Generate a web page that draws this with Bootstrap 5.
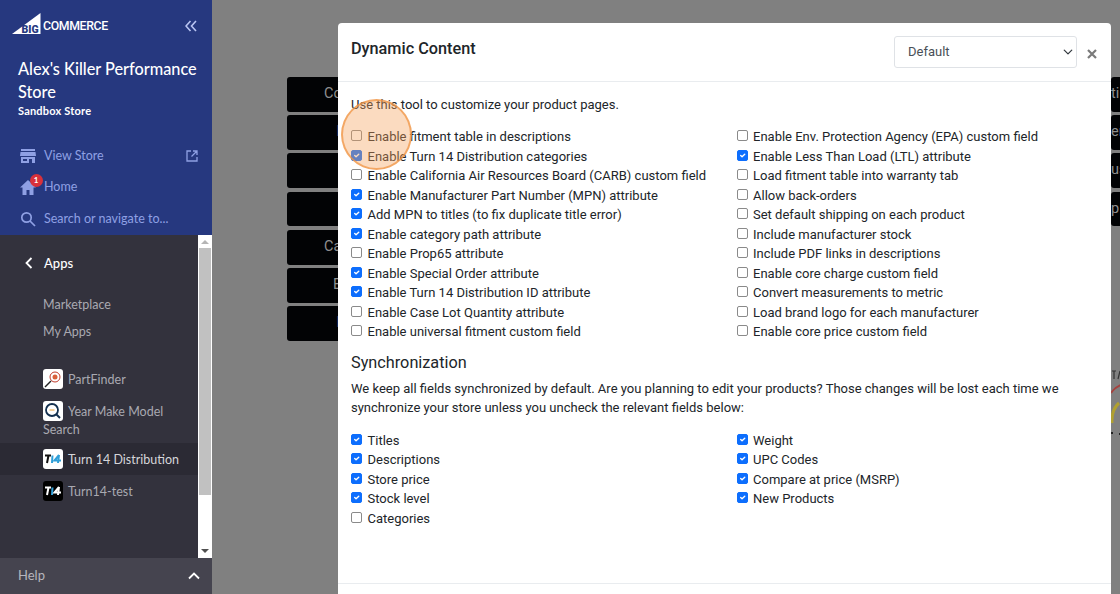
<!DOCTYPE html>
<html lang="en">
<head>
  <meta charset="UTF-8">
  <title>Dynamic Content</title>
  <link href="https://cdn.jsdelivr.net/npm/bootstrap@5.3.3/dist/css/bootstrap.min.css" rel="stylesheet">
  <style>
    html, body { height: 594px; overflow: hidden; }
    body { font-family: Roboto, sans-serif; background: #808080; }
    .shell { height: 594px; width: 1120px; position: relative; overflow: hidden; }
    .side { width: 212px; height: 594px; font-family: Lato, sans-serif; background: #33323d; flex: none; }
    .side-top { height: 235px; background: #26387f; color: #fff; padding: 11px 15px 0 18px; }
    .logo-row { height: 30px; margin-left: -6px; }
    .logo-mark { margin-bottom: 5px; }
    .logo-text { font: 500 12.3px Roboto, sans-serif; color: #fff; margin-left: 2px; letter-spacing: -.35px; }
    .store-name { font-size: 16.3px; line-height: 23px; font-weight: 500; margin: 16px -3px 0 0; }
    .store-type { font-size: 11px; line-height: 15px; font-weight: 700; letter-spacing: .2px; margin-top: -.5px; }
    .top-link { color: #8fa0e4; font-size: 12.5px; height: 31.5px; gap: 8px; }
    .top-links { margin: 23px -1px 0 2px; }
    .top-link svg { flex: none; }
    .alert-dot { position: absolute; left: 9.5px; top: -6px; width: 13px; height: 13px; border-radius: 50%; background: #d8313b; color: #fff; font-size: 8px; font-weight: 700; line-height: 13px; text-align: center; }
    .side-scroll { height: 323px; position: relative; }
    .scroll-track { width: 14px; height: 323px; background: #fff; flex: none; padding-top: 13px; position: relative; }
    .scroll-thumb { width: 12px; height: 247px; margin-left: 1px; background: #c1c1c1; }
    .scroll-up, .scroll-down { position: absolute; left: 3px; width: 0; height: 0; border-left: 4px solid transparent; border-right: 4px solid transparent; }
    .scroll-up { top: 5px; border-bottom: 4px solid #b5b5b5; }
    .scroll-down { bottom: 5px; border-top: 4px solid #505050; }
    .side-menu { flex: 1; min-width: 0; color: #a9a9b1; font-size: 12.5px; }
    .apps-head { color: #fff; height: 56px; font-size: 13px; font-weight: 500; padding-left: 25px; gap: 11px; }
    .apps-head span { padding-top: 2px; }
    .sub-link { padding-left: 43px; height: 27px; line-height: 27px; }
    .app-row { padding: 6px 0 6px 43px; line-height: 18px; }
    .app-row.d-flex > span:last-child { padding-top: 2px; }
    .app-one { margin-top: 18px; }
    .app-two { padding-bottom: 5px; line-height: 17px; }
    .app-tile { width: 20px; height: 20px; border-radius: 3px; background: #fff; flex: none; display: inline-flex; align-items: center; justify-content: center; vertical-align: -4px; margin-right: 5px; overflow: hidden; }
    .app-dark { background: #000; }
    .app-active { background: #2b2a34; color: #d6d6da; }
    .help-bar { height: 36px; background: #45444f; color: #b6b6bd; font-size: 13px; padding: 0 12px 0 18px; }
    .page-area { flex: 1; position: relative; background: #808080; }
    .dim-btn { position: absolute; left: 75px; width: 800px; height: 34.5px; background: #020305; border-radius: 3px; color: #8f8f8f; font-size: 14.5px; line-height: 34px; }
    .dim-btn span { position: absolute; left: 37px; }
    .dim-btn span.dim-far { left: 46px; }
    .dim-btn span.dim-blue { left: 49px; color: #2b3560; }
    .dim-right { left: 899px; width: 30px; }
    .dim-right span { left: 0; }
    .gauge { position: absolute; left: 899px; top: 368px; width: 10px; height: 72px; }
    .dialog { position: absolute; left: 338px; top: 23px; width: 773px; height: 580px; background: #fff; border-radius: 4px 4px 0 0; color: #212529; font-size: 13px; }
    .dialog-head { height: 59px; border-bottom: 1px solid #e9ecef; padding: 14px 14px 0 13px; }
    .dialog-title { font-size: 16.25px; line-height: 24px; font-weight: 500; margin: 0; }
    .dialog-select { width: 183px; height: 32px; margin-top: -1px; font-size: 13px; color: #495057; padding: 0 24px 0 13px; border-color: #dfe2e6; border-radius: 3px; font-family: Roboto, sans-serif; background-position: right 3px center; background-size: 10px 10px; }
    .close-x { margin: 2px 0 0 10px; }
    .dialog-body { padding: 12.5px 13px 0; }
    .intro { line-height: 19.5px; margin: 0 0 13px; }
    .opts { display: grid; grid-template-columns: 385.5px 1fr; }
    .form-check.opt { margin: 0; padding-left: 16.5px; min-height: 0; line-height: 19.5px; height: 19.5px; white-space: nowrap; }
    .opt .form-check-input { width: 11px; height: 11px; margin: 3px 0 0 -16.5px; border-color: #8a8a8a; border-radius: 2px; }
    .opt .form-check-input:checked { background-color: #0d6efd; border-color: #0d6efd; }
    .sync-title { font-size: 16.25px; font-weight: 400; line-height: 24px; margin: 9.2px 0 4px; }
    .sync-text { line-height: 19.5px; margin: 0 0 13.3px; }
    .dialog-foot { position: absolute; left: 0; right: 0; top: 560px; border-top: 1px solid #e9ecef; height: 20px; }
    .spot { position: absolute; left: 341px; top: 99px; width: 71px; height: 71px; border-radius: 50%; background: rgba(245, 160, 90, .38); border: 2px solid rgba(240, 150, 70, .75); }
  </style>
</head>
<body>
  <div class="shell d-flex">
    <div class="side d-flex flex-column">
      <div class="side-top">
        <div class="logo-row d-flex align-items-center justify-content-between">
          <div class="d-flex align-items-center">
            <svg class="logo-mark" width="29" height="21" viewBox="0 0 29 21"><path d="M0 21 28.500 0v21z" fill="#fff"/><text x="9.500" y="19.500" font-family="Roboto" font-size="10.500" font-weight="900" fill="#26387f">BIG</text></svg>
            <span class="logo-text">COMMERCE</span>
          </div>
          <svg width="12" height="12" viewBox="0 0 12 12" fill="none" stroke="#b9c5f2" stroke-width="1.6"><path d="M5.500 1 1 6l4.500 5M11 1 6.500 6l4.500 5"/></svg>
        </div>
        <div class="store-name">Alex's Killer Performance Store</div>
        <div class="store-type">Sandbox Store</div>
        <div class="top-links">
          <div class="top-link d-flex align-items-center justify-content-between">
            <div class="d-flex align-items-center gap-2">
              <svg width="16" height="14" viewBox="0 0 16 14" fill="#8fa0e4"><path d="M1 0h14v2H1zM.5 3h15l.5 4H0zM1 8h14v6h-3v-4H9v4H1zM3 10v2h4v-2z" fill-rule="evenodd"/></svg>
              <span>View Store</span>
            </div>
            <svg width="12" height="12" viewBox="0 0 12 12" fill="none" stroke="#8fa0e4" stroke-width="1.300"><path d="M5 1H1v10h10V7M7 1h4v4M11 1 5.500 6.500"/></svg>
          </div>
          <div class="top-link d-flex align-items-center">
            <div class="position-relative d-flex">
              <svg width="16" height="15" viewBox="0 0 16 15" fill="#8fa0e4"><path d="M8 0 0 7.500h2.500V15h4v-5h3v5h4V7.500H16z"/></svg>
              <span class="alert-dot">1</span>
            </div>
            <span>Home</span>
          </div>
          <div class="top-link d-flex align-items-center">
            <svg width="16" height="16" viewBox="0 0 16 16" fill="none" stroke="#8fa0e4" stroke-width="1.700"><circle cx="6.500" cy="6.500" r="4.700"/><path d="m10 10 5 5"/></svg>
            <span>Search or navigate to...</span>
          </div>
        </div>
      </div>
      <div class="side-scroll d-flex">
        <div class="side-menu">
          <div class="apps-head d-flex align-items-center">
            <svg width="8" height="12" viewBox="0 0 8 12" fill="none" stroke="#fff" stroke-width="1.800"><path d="M6.500 1 1.500 6l5 5"/></svg>
            <span>Apps</span>
          </div>
          <div class="sub-link">Marketplace</div>
          <div class="sub-link">My Apps</div>
          <div class="app-row d-flex align-items-center app-one"><span class="app-tile"><svg width="18" height="18" viewBox="0 0 18 18"><circle cx="11" cy="7" r="5" fill="#fff" stroke="#c0392b"/><circle cx="11" cy="7" r="2.500" fill="#d9603b"/><path d="m7 11-6 6" stroke="#222" stroke-width="1.500"/></svg></span><span>PartFinder</span></div>
          <div class="app-row app-two"><span class="app-tile"><svg width="18" height="18" viewBox="0 0 18 18" fill="none"><circle cx="8" cy="8" r="6" stroke="#14304f" stroke-width="1.800"/><path d="m12 12 4 4" stroke="#14304f" stroke-width="2"/><path d="M5.500 8h5" stroke="#e9a13b"/></svg></span><span>Year Make Model Search</span></div>
          <div class="app-row app-active d-flex align-items-center"><span class="app-tile"><svg width="18" height="10" viewBox="0 0 18 10" fill="none" stroke-width="2"><path d="M1 1.500h6M4.500 1.500 3 9" stroke="#111"/><path d="M8.500 1.500 8 9" stroke="#2f9fd8"/><path d="M15 1 10.500 6.500H17M15 1l-1 8" stroke="#2f9fd8"/></svg></span><span>Turn 14 Distribution</span></div>
          <div class="app-row d-flex align-items-center"><span class="app-tile app-dark"><svg width="18" height="10" viewBox="0 0 18 10" fill="none" stroke-width="2"><path d="M1 1.500h6M4.500 1.500 3 9" stroke="#fff"/><path d="M8.500 1.500 8 9" stroke="#2f9fd8"/><path d="M15 1 10.500 6.500H17M15 1l-1 8" stroke="#fff"/></svg></span><span>Turn14-test</span></div>
        </div>
        <div class="scroll-track"><span class="scroll-up"></span><div class="scroll-thumb"></div><span class="scroll-down"></span></div>
      </div>
      <div class="help-bar d-flex align-items-center justify-content-between">
        <span>Help</span>
        <svg width="12" height="8" viewBox="0 0 12 8" fill="none" stroke="#fff" stroke-width="1.800"><path d="m1 6.500 5-5 5 5"/></svg>
      </div>
    </div>
    <div class="page-area">
      <div class="dim-btn" style="top:77px"><span>Co</span></div>
      <div class="dim-btn" style="top:115px"><span class="dim-blue">I</span></div>
      <div class="dim-btn" style="top:153px"></div>
      <div class="dim-btn" style="top:191.500px"></div>
      <div class="dim-btn" style="top:230px"><span>Ca</span></div>
      <div class="dim-btn" style="top:268px"><span class="dim-far">E</span></div>
      <div class="dim-btn" style="top:306px"><span class="dim-blue">I</span></div>
      <div class="dim-btn dim-right" style="top:77px"><span>ti</span></div>
      <div class="dim-btn dim-right" style="top:115px"><span>er</span></div>
      <div class="dim-btn dim-right" style="top:153px"><span>us</span></div>
      <div class="dim-btn dim-right" style="top:191.500px"><span>p</span></div>
      <svg class="gauge" viewBox="0 0 10 72" fill="none"><path d="M1 3h4M3 3v8M7 11l2-8" stroke="#333" stroke-width="1.200"/><path d="M0 25Q3 20 10 17" stroke="#a5423f" stroke-width="2"/><path d="M1 55Q0 42 8 35" stroke="#b0a030" stroke-width="3"/><path d="M0 65h2M8 66h2" stroke="#222" stroke-width="2"/></svg>
    </div>
    <div class="dialog">
      <div class="dialog-head d-flex align-items-start justify-content-between">
        <h5 class="dialog-title">Dynamic Content</h5>
        <div class="d-flex align-items-center">
          <select class="form-select dialog-select"><option>Default</option></select>
          <svg class="close-x" width="10" height="10" viewBox="0 0 10 10" stroke="#7a7a7a" stroke-width="2.200"><path d="m1 1 8 8M9 1 1 9"/></svg>
        </div>
      </div>
      <div class="dialog-body">
        <p class="intro">Use this tool to customize your product pages.</p>
        <div class="opts" id="opts"></div>
        <h5 class="sync-title">Synchronization</h5>
        <p class="sync-text">We keep all fields synchronized by default. Are you planning to edit your products? Those changes will be lost each time we synchronize your store unless you uncheck the relevant fields below:</p>
        <div class="opts" id="syncs"></div>
      </div>
      <div class="dialog-foot"></div>
    </div>
    <div class="spot"></div>
  </div>

  <script src="https://cdn.jsdelivr.net/npm/bootstrap@5.3.3/dist/js/bootstrap.bundle.min.js"></script>
  <script>
    const options = [
      ["Enable fitment table in descriptions", 0], ["Enable Env. Protection Agency (EPA) custom field", 0],
      ["Enable Turn 14 Distribution categories", 1], ["Enable Less Than Load (LTL) attribute", 1],
      ["Enable California Air Resources Board (CARB) custom field", 0], ["Load fitment table into warranty tab", 0],
      ["Enable Manufacturer Part Number (MPN) attribute", 1], ["Allow back-orders", 0],
      ["Add MPN to titles (to fix duplicate title error)", 1], ["Set default shipping on each product", 0],
      ["Enable category path attribute", 1], ["Include manufacturer stock", 0],
      ["Enable Prop65 attribute", 0], ["Include PDF links in descriptions", 0],
      ["Enable Special Order attribute", 1], ["Enable core charge custom field", 0],
      ["Enable Turn 14 Distribution ID attribute", 1], ["Convert measurements to metric", 0],
      ["Enable Case Lot Quantity attribute", 0], ["Load brand logo for each manufacturer", 0],
      ["Enable universal fitment custom field", 0], ["Enable core price custom field", 0]
    ];
    const syncFields = [
      ["Titles", 1], ["Weight", 1], ["Descriptions", 1], ["UPC Codes", 1],
      ["Store price", 1], ["Compare at price (MSRP)", 1], ["Stock level", 1], ["New Products", 1],
      ["Categories", 0]
    ];
    function renderChecks(id, list) {
      document.getElementById(id).innerHTML = list.map(([label, on]) => `
        <div class="form-check opt">
          <input class="form-check-input" type="checkbox" ${on ? "checked" : ""}>
          <label class="form-check-label">${label}</label>
        </div>`).join("");
    }
    renderChecks("opts", options);
    renderChecks("syncs", syncFields);
  </script>
</body>
</html>
